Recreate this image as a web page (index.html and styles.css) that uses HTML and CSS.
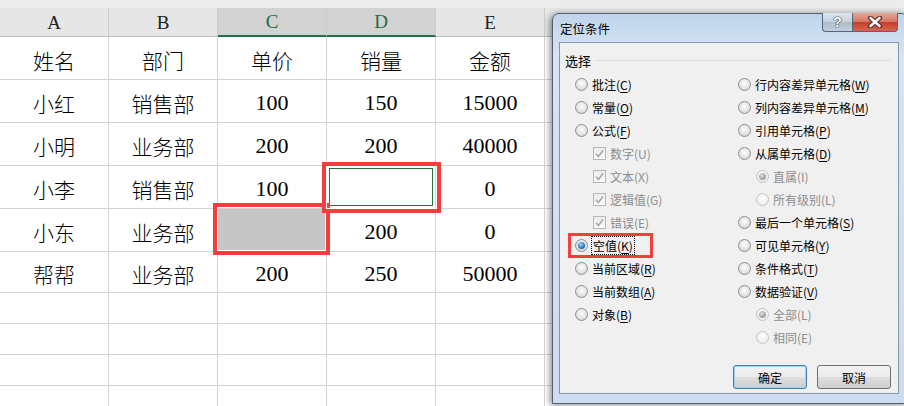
FILE: index.html
```html
<!DOCTYPE html>
<html lang="zh-CN">
<head>
  <meta charset="UTF-8">
  <title>定位条件</title>
  <link rel="stylesheet" href="styles.css">
</head>
<body>
  <div class="sheet">
    <div class="topbar"></div>
    <div class="row heads">
      <div class="head">A</div>
      <div class="head">B</div>
      <div class="head on">C</div>
      <div class="head on">D</div>
      <div class="head">E</div>
      <div class="head rest"></div>
    </div>
    <div class="row tall">
      <div class="cell">姓名</div><div class="cell">部门</div><div class="cell">单价</div><div class="cell">销量</div><div class="cell">金额</div><div class="cell rest"></div>
    </div>
    <div class="row tall">
      <div class="cell">小红</div><div class="cell">销售部</div><div class="cell num">100</div><div class="cell num">150</div><div class="cell num">15000</div><div class="cell rest"></div>
    </div>
    <div class="row tall">
      <div class="cell">小明</div><div class="cell">业务部</div><div class="cell num">200</div><div class="cell num">200</div><div class="cell num">40000</div><div class="cell rest"></div>
    </div>
    <div class="row tall">
      <div class="cell">小李</div><div class="cell">销售部</div><div class="cell num">100</div><div class="cell sel"></div><div class="cell num">0</div><div class="cell rest"></div>
    </div>
    <div class="row tall">
      <div class="cell">小东</div><div class="cell">业务部</div><div class="cell filled"></div><div class="cell num">200</div><div class="cell num">0</div><div class="cell rest"></div>
    </div>
    <div class="row mid">
      <div class="cell">帮帮</div><div class="cell">业务部</div><div class="cell num">200</div><div class="cell num">250</div><div class="cell num">50000</div><div class="cell rest"></div>
    </div>
    <div class="row"><div class="cell"></div><div class="cell"></div><div class="cell"></div><div class="cell"></div><div class="cell"></div><div class="cell rest"></div></div>
    <div class="row"><div class="cell"></div><div class="cell"></div><div class="cell"></div><div class="cell"></div><div class="cell"></div><div class="cell rest"></div></div>
    <div class="row"><div class="cell"></div><div class="cell"></div><div class="cell"></div><div class="cell"></div><div class="cell"></div><div class="cell rest"></div></div>
    <div class="row"><div class="cell"></div><div class="cell"></div><div class="cell"></div><div class="cell"></div><div class="cell"></div><div class="cell rest"></div></div>

    <!-- annotation boxes -->
    <div class="mark mark-c5"></div>
    <div class="mark mark-d4"></div>
  </div>

  <div class="dialog">
    <div class="titlebar">
      <span class="title">定位条件</span>
      <div class="caption-btns">
        <span class="cap help">?</span>
        <span class="cap close">
          <svg width="16" height="12" viewBox="0 0 16 12">
            <path d="M3.5 2 L12.5 10 M12.5 2 L3.5 10" stroke="#5a2a22" stroke-width="5" stroke-linecap="round"/>
            <path d="M3.5 2 L12.5 10 M12.5 2 L3.5 10" stroke="#fff" stroke-width="2.6" stroke-linecap="round"/>
          </svg>
        </span>
      </div>
    </div>

    <div class="panel">
      <div class="group-label"><span>选择</span><i></i></div>

      <div class="options">
        <div class="col">
          <div class="opt"><span class="radio"></span><span>批注(<u>C</u>)</span></div>
          <div class="opt"><span class="radio"></span><span>常量(<u>O</u>)</span></div>
          <div class="opt"><span class="radio"></span><span>公式(<u>F</u>)</span></div>
          <div class="opt sub off"><span class="check"><svg width="11" height="11" viewBox="0 0 11 11"><path d="M2 5.8 L4.4 8.4 L9 2.4" fill="none" stroke="#a8a8a8" stroke-width="1.6"/></svg></span><span>数字(U)</span></div>
          <div class="opt sub off"><span class="check"><svg width="11" height="11" viewBox="0 0 11 11"><path d="M2 5.8 L4.4 8.4 L9 2.4" fill="none" stroke="#a8a8a8" stroke-width="1.6"/></svg></span><span>文本(X)</span></div>
          <div class="opt sub off"><span class="check"><svg width="11" height="11" viewBox="0 0 11 11"><path d="M2 5.8 L4.4 8.4 L9 2.4" fill="none" stroke="#a8a8a8" stroke-width="1.6"/></svg></span><span>逻辑值(G)</span></div>
          <div class="opt sub off"><span class="check"><svg width="11" height="11" viewBox="0 0 11 11"><path d="M2 5.8 L4.4 8.4 L9 2.4" fill="none" stroke="#a8a8a8" stroke-width="1.6"/></svg></span><span>错误(E)</span></div>
          <div class="opt"><span class="radio on"></span><span class="focus">空值(<u>K</u>)</span></div>
          <div class="opt"><span class="radio"></span><span>当前区域(<u>R</u>)</span></div>
          <div class="opt"><span class="radio"></span><span>当前数组(<u>A</u>)</span></div>
          <div class="opt"><span class="radio"></span><span>对象(<u>B</u>)</span></div>
        </div>
        <div class="col">
          <div class="opt"><span class="radio"></span><span>行内容差异单元格(<u>W</u>)</span></div>
          <div class="opt"><span class="radio"></span><span>列内容差异单元格(<u>M</u>)</span></div>
          <div class="opt"><span class="radio"></span><span>引用单元格(<u>P</u>)</span></div>
          <div class="opt"><span class="radio"></span><span>从属单元格(<u>D</u>)</span></div>
          <div class="opt sub off"><span class="radio on"></span><span>直属(I)</span></div>
          <div class="opt sub off"><span class="radio"></span><span>所有级别(L)</span></div>
          <div class="opt"><span class="radio"></span><span>最后一个单元格(<u>S</u>)</span></div>
          <div class="opt"><span class="radio"></span><span>可见单元格(<u>Y</u>)</span></div>
          <div class="opt"><span class="radio"></span><span>条件格式(<u>T</u>)</span></div>
          <div class="opt"><span class="radio"></span><span>数据验证(<u>V</u>)</span></div>
          <div class="opt sub off"><span class="radio on"></span><span>全部(L)</span></div>
          <div class="opt sub off"><span class="radio"></span><span>相同(E)</span></div>
        </div>
      </div>

      <div class="buttons">
        <button class="btn default">确定</button>
        <button class="btn">取消</button>
      </div>
    </div>

    <div class="mark mark-empty"></div>
  </div>
</body>
</html>
```

FILE: styles.css
```css
/* Reset */
body {
  margin: 0;
  width: 904px;
  height: 406px;
  overflow: hidden;
  position: relative;
  background: #fff;
}

/* Spreadsheet */
.sheet {
  position: relative;
  font-family: "Liberation Serif", "Noto Sans CJK SC", serif;
  color: #000;
}

.topbar {
  height: 8px;
  background-color: #ececec;
}

.row {
  display: flex;
  height: 31px;
}

.row.tall {
  height: 43px;
}

.row.mid {
  height: 41px;
}

.row.heads {
  height: 29px;
}

.head {
  width: 109px;
  box-sizing: border-box;
  background-color: #e6e6e6;
  border-right: 1px solid #cacaca;
  border-bottom: 1px solid #bebebe;
  display: flex;
  align-items: center;
  justify-content: center;
  font-size: 19px;
  color: #222;
  padding-top: 1px;
}

.head.on {
  background-color: #d2d2d2;
  color: #1f6b43;
  border-bottom: 2px solid #217346;
}

.cell {
  width: 109px;
  flex-shrink: 0;
  box-sizing: border-box;
  border-right: 1px solid #d4d4d4;
  border-bottom: 1px solid #d4d4d4;
  display: flex;
  align-items: center;
  justify-content: center;
  font-size: 21px;
  font-weight: 300;
  padding-top: 3px;
}

.cell.num {
  font-size: 22px;
}

.head.rest,
.cell.rest {
  flex: 1;
  border-right: none;
}

.cell.filled {
  background-color: #c6c6c6;
}

.cell.sel {
  box-shadow: inset 0 0 0 2px #fff, inset 0 0 0 3px #217346;
}

.mark {
  position: absolute;
  box-sizing: border-box;
  border: 4px solid #f43d3d;
  box-shadow: inset 0 0 0 1px #fff;
}

.mark-c5 {
  left: 213px;
  top: 203px;
  width: 117px;
  height: 52px;
}

.mark-d4 {
  left: 322px;
  top: 162px;
  width: 119px;
  height: 51px;
}

/* Dialog window */
.dialog {
  position: absolute;
  left: 552px;
  top: 13px;
  width: 356px;
  height: 391px;
  box-sizing: border-box;
  border: 1px solid #4f5f77;
  border-radius: 7px 7px 0 0;
  background: linear-gradient(to bottom, #bfd4eb 0, #d6e4f3 40px, #cddcee 100%);
  box-shadow: -2px 1px 6px rgba(0, 0, 0, 0.45);
  font-family: "Noto Sans CJK SC", "Liberation Sans", sans-serif;
  font-size: 12px;
  color: #000;
  display: flex;
  flex-direction: column;
}

.titlebar {
  height: 28px;
  display: flex;
  justify-content: space-between;
  align-items: flex-start;
  padding: 0 9px 0 7px;
}

.title {
  margin-top: 5px;
  font-size: 12.5px;
}

.caption-btns {
  display: flex;
  margin-top: -1px;
}

.cap {
  height: 19px;
  box-sizing: border-box;
  border: 1px solid #55667c;
  border-top: none;
  display: flex;
  align-items: center;
  justify-content: center;
}

.help {
  width: 30px;
  border-right: none;
  border-radius: 0 0 0 4px;
  background: linear-gradient(to bottom, #dde6ef, #c4d0dc 50%, #aebdcc 51%, #c2cfdc);
  color: #fff;
  font-family: "Liberation Sans", sans-serif;
  font-weight: bold;
  font-size: 14px;
  text-shadow: 0 0 1px #333, 0 0 1px #333, 0 0 1px #333;
}

.close {
  width: 46px;
  border-radius: 0 0 4px 0;
  background: linear-gradient(to bottom, #e9a99a, #d6735f 50%, #c2412c 51%, #d9624c);
}

.panel {
  flex: 1;
  margin: 0 8px 9px 6px;
  border: 1px solid #8396b0;
  background-color: #f0f0f0;
  display: flex;
  flex-direction: column;
}

.group-label {
  display: flex;
  align-items: center;
  margin: 8px 7px 0 5px;
  font-size: 13px;
}

.group-label i {
  flex: 1;
  height: 1px;
  margin-left: 4px;
  background-color: #d5dfe5;
}

.options {
  display: grid;
  grid-template-columns: 163px 1fr;
  padding-left: 15px;
  margin-top: 3px;
}

.opt {
  height: 23px;
  display: flex;
  align-items: center;
  gap: 4px;
  white-space: nowrap;
}

.opt.sub {
  padding-left: 18px;
}

.opt.off {
  color: #8d8d8d;
}

.opt u {
  text-decoration-thickness: 1px;
  text-underline-offset: 2px;
}

.radio {
  width: 13px;
  height: 13px;
  flex-shrink: 0;
  box-sizing: border-box;
  border-radius: 50%;
  border: 1px solid #8c8f93;
  background: radial-gradient(circle at 50% 40%, #fdfdfd 0, #e4e4e4 55%, #c9cbcd 100%);
  position: relative;
}

.radio.on::after {
  content: "";
  position: absolute;
  left: 2px;
  top: 2px;
  width: 7px;
  height: 7px;
  border-radius: 50%;
  background: radial-gradient(circle at 40% 35%, #9fd8ff 0, #2a7fc4 55%, #0f3e6e 100%);
}

.off .radio {
  border-color: #c3c5c7;
  background: radial-gradient(circle at 50% 40%, #fdfdfd 0, #f0f0f0 60%, #e2e2e2 100%);
}

.off .radio.on::after {
  background: radial-gradient(circle at 40% 35%, #dedede 0, #a3a3a3 60%, #8a8a8a 100%);
}

.check {
  width: 13px;
  height: 13px;
  flex-shrink: 0;
  box-sizing: border-box;
  border: 1px solid #b7b7b7;
  background: linear-gradient(to bottom, #ececec, #fbfbfb);
  display: flex;
  align-items: center;
  justify-content: center;
}

.focus {
  outline: 1px dotted #000;
  outline-offset: 0;
  padding: 0 1px;
}

.buttons {
  display: flex;
  justify-content: flex-end;
  gap: 10px;
  padding-right: 7px;
  margin-top: 16px;
}

.btn {
  width: 74px;
  height: 24px;
  box-sizing: border-box;
  border: 1px solid #707070;
  border-radius: 3px;
  background: linear-gradient(to bottom, #f2f2f2 0, #ebebeb 50%, #dddddd 51%, #cfcfcf 100%);
  font-family: "Noto Sans CJK SC", sans-serif;
  font-size: 12px;
  color: #000;
  padding: 0;
}

.btn.default {
  border-color: #3c7fb1;
  box-shadow: inset 0 0 0 1px #9fd5f3;
}

.mark-empty {
  left: 15px;
  top: 219px;
  width: 85px;
  height: 25px;
  border-width: 3px;
  box-shadow: none;
}
```
